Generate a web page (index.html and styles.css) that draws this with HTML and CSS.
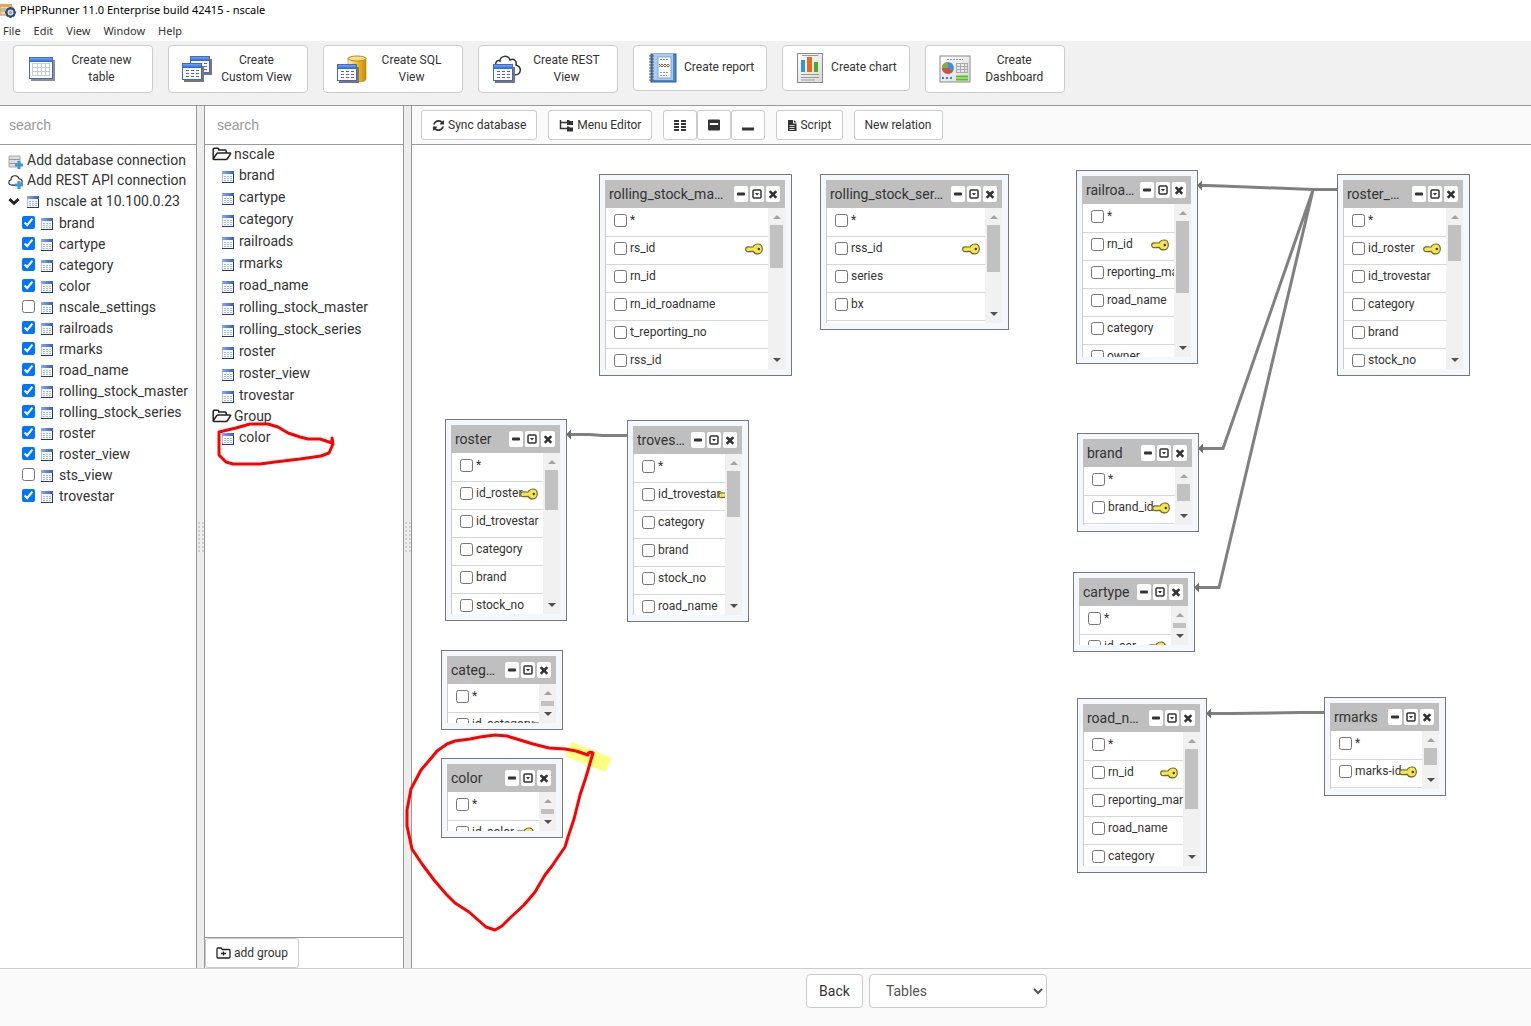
FILE: index.html
```html
<!DOCTYPE html>
<html lang="en">
<head>
<meta charset="utf-8">
<title>PHPRunner 11.0 Enterprise build 42415 - nscale</title>
<link rel="stylesheet" href="styles.css">
</head>
<body>
<svg class="defs" aria-hidden="true">
  <defs>
    <linearGradient id="blue" x1="0" x2="1"><stop offset="0" stop-color="#8fa8f0"/><stop offset="1" stop-color="#2f5fc8"/></linearGradient>
    <linearGradient id="bar" x1="0" x2="0" y1="0" y2="1"><stop offset="0" stop-color="#6fa4f8"/><stop offset="1" stop-color="#2a62d4"/></linearGradient>
    <linearGradient id="gold" x1="0" x2="1"><stop offset="0" stop-color="#fff0b0"/><stop offset=".5" stop-color="#f7c022"/><stop offset="1" stop-color="#c98a00"/></linearGradient>
    <linearGradient id="paper" x1="0" x2="1" y1="0" y2="1"><stop offset="0" stop-color="#ffffff"/><stop offset="1" stop-color="#d8d8d8"/></linearGradient>
  </defs>
  <symbol id="table" viewBox="0 0 12 12">
    <rect width="12" height="12" fill="#b9bbe8"/><path d="M11 1h1v11H0v-1h11z" fill="#2c3478"/>
    <rect x="1" y="3" width="10" height="8" fill="#f4faff"/><rect width="12" height="3" fill="url(#blue)"/>
    <path d="M2 5.500h2m1 0h2m1 0h2M2 7.500h2m1 0h2m1 0h2M2 9.500h2m1 0h2m1 0h2" stroke="#a9bccb"/>
  </symbol>
  <symbol id="grid-big" viewBox="0 0 26 24">
    <path d="M2 23h23V3" fill="none" stroke="#8e8e8e" stroke-width="2"/>
    <rect x=".5" y=".5" width="23" height="21" fill="#fff" stroke="#3f6cc0"/><rect x="1" y="1" width="22" height="4" fill="url(#bar)"/>
    <path d="M3 6.500h18M3 10.500h18M3 14.500h18M3 18.500h18M3.500 6v13M8.500 6v13M12.500 6v13M16.500 6v13M20.500 6v13" stroke="#c3cbd8"/>
  </symbol>
  <symbol id="grid-small" viewBox="0 0 22 19">
    <path d="M2 18h19V3" fill="none" stroke="#777" stroke-width="2"/>
    <rect x=".5" y=".5" width="19" height="16" fill="#f7f9fc" stroke="#3f6cc0"/><rect x="1" y="1" width="18" height="4" fill="url(#bar)"/>
    <path d="M4 7.500h3m2 0h3m2 0h3M4 10.500h3m2 0h3m2 0h3M4 13.500h3m2 0h3m2 0h3" stroke="#667"/>
  </symbol>
  <symbol id="key" viewBox="0 0 18 12">
    <path d="M9 2.600Q10.500 1 13 1c2.500 0 4.300 2 4.300 4.900s-2.100 5-4.700 5C10.600 10.900 9 10 8.300 8.400L3 8.600C1.500 8.600.6 7.500.7 6.100S1.600 3.900 2.800 3.900L8 4z" fill="#f7e64a" stroke="#6e6838" stroke-width="1.200"/><circle cx="13.800" cy="6" r="1.200" fill="#333"/>
  </symbol>
  <symbol id="times" viewBox="0 0 1792 1792"><path d="M1490 1322q0 40-28 68l-136 136q-28 28-68 28t-68-28l-294-294-294 294q-28 28-68 28t-68-28l-136-136q-28-28-28-68t28-68l294-294-294-294q-28-28-28-68t28-68l136-136q28-28 68-28t68 28l294 294 294-294q28-28 68-28t68 28l136 136q28 28 28 68t-28 68l-294 294 294 294q28 28 28 68z"/></symbol>
  <symbol id="minus" viewBox="0 0 12 12"><rect x="2" y="4.500" width="8" height="3" rx=".8"/></symbol>
  <symbol id="square" viewBox="0 0 12 12"><rect x="2" y="2" width="8" height="8" rx="1" fill="none" stroke="currentColor" stroke-width="1.500"/><path d="M4 5h4L6 7.400z"/></symbol>
  <symbol id="refresh" viewBox="0 0 1792 1792"><path d="M1639 1056q0 5-1 7-64 268-268 434.500t-478 166.500q-146 0-282.500-55t-243.500-157l-129 129q-19 19-45 19t-45-19-19-45v-448q0-26 19-45t45-19h448q26 0 45 19t19 45-19 45l-137 137q71 66 161 102t187 36q134 0 250-65t186-179q11-17 53-117 8-23 30-23h192q13 0 22.500 9.500t9.500 22.500zm25-800v448q0 26-19 45t-45 19h-448q-26 0-45-19t-19-45 19-45l138-138q-148-137-349-137-134 0-250 65t-186 179q-11 17-53 117-8 23-30 23h-199q-13 0-22.500-9.500t-9.500-22.500v-7q65-268 270-434.500t480-166.500q146 0 284 55.500t245 156.500l130-129q19-19 45-19t45 19 19 45z"/></symbol>
  <symbol id="folder" viewBox="0 0 20 14"><path d="M1.200 11.500V2.200q0-1 1-1h3.600q1 0 1 1v.9h6.400q1 0 1 1V6M1.200 11.800L4.600 6.800q.6-.8 1.500-.8h12q.9 0 .4.900l-3 4.600q-.6.900-1.500.9H2q-1 0-.8-.7" fill="none" stroke="#222" stroke-width="1.500"/></symbol>
  <symbol id="grip" viewBox="0 0 6 30"><path d="M1 0v30M5 0v30" stroke="#ccc" stroke-width="2" stroke-dasharray="2 2"/></symbol>
  <symbol id="cloud" viewBox="0 0 18 14"><path d="M5 12.500Q1 12.500 1 9.300 1 6.800 3.600 6.200 3.600 1.200 8.400 1.200q4 0 4.600 3.600 4 0 4 3.800 0 3.900-4.300 3.900z" fill="#fff" stroke="#222" stroke-width="1.300"/></symbol>
</svg>

<header class="titlebar">
  <svg class="app-icon" viewBox="0 0 16 16"><path d="M0 3h7l1 2h5v8H0z" fill="#f2d9a8" stroke="#b98a50"/><path d="M0 2h12v3H0z" fill="#e8a35a"/><path d="M1 7h5M1 9h5" stroke="#999"/><circle cx="10.500" cy="10.500" r="4" fill="#cfe0f4" stroke="#1f4b86" stroke-width="2"/><path d="M10.500 5v2m0 7v2M5 10.500h2m7 0h2M6.700 6.700l1.200 1.200m5.200 5.200l1.200 1.200m0-7.600l-1.200 1.200m-5.200 5.200l-1.200 1.200" stroke="#1f4b86" stroke-width="2"/><circle cx="10.500" cy="10.500" r="1.500" fill="#e08a2c"/></svg>
  <span>PHPRunner 11.0 Enterprise build 42415 - nscale</span>
</header>
<nav class="menubar">
  <button>File</button><button>Edit</button><button>View</button><button>Window</button><button>Help</button>
</nav>

<div class="toolbar">
  <button class="create wide"><svg class="i-new" viewBox="0 0 26 24"><use href="#grid-big"/></svg><span>Create new<br>table</span></button>
  <button class="create wide"><svg class="i-tool" viewBox="0 0 30 26"><use href="#grid-small" x="8" y="0" width="22" height="19"/><use href="#grid-small" x="0" y="7" width="22" height="19"/></svg><span>Create<br>Custom View</span></button>
  <button class="create wide"><svg class="i-tool" viewBox="0 0 30 28"><path d="M11 3v21q0 3 9 3t9-3V3z" fill="url(#gold)" stroke="#b07c10" stroke-width=".6"/><ellipse cx="20" cy="3.500" rx="9" ry="2.500" fill="#fbe08a" stroke="#b88a20"/><use href="#grid-small" x="0" y="9" width="22" height="19"/></svg><span>Create SQL<br>View</span></button>
  <button class="create wide"><svg class="i-tool" viewBox="0 0 30 28"><path d="M4 10C3 6 6 5 8 6 8 1 16-1 18 5c4-2 7 1 6 5 6 2 6 10-2 10" fill="#fff" stroke="#333" stroke-width="1.500"/><use href="#grid-small" x="1" y="9" width="22" height="19"/></svg><span>Create REST<br>View</span></button>
  <button class="create"><svg class="i-tool" viewBox="0 0 30 30"><rect x="4" y="1" width="25" height="28" fill="#4d86c4" stroke="#2e5f98"/><rect x="6" y="1" width="20" height="26" fill="#a8cdf0"/><rect x="11" y="4" width="13" height="21" fill="#fff" stroke="#7fa6cc"/><path d="M12 14l3-3 3 3 3-3 2 2" fill="none" stroke="#2ba02b"/><path d="M12 11l3 3 3-3 3 3 2-2" fill="none" stroke="#e03030"/><path d="M13 6.500h9M13 19.500h9M13 22.500h7" stroke="#999" stroke-dasharray="2 1"/><path d="M2 3h5M2 6h5M2 9h5M2 12h5M2 15h5M2 18h5M2 21h5M2 24h5M2 27h5" stroke="#555"/></svg><span>Create report</span></button>
  <button class="create"><svg class="i-chart" viewBox="0 0 28 32"><rect x="1.500" y="1.500" width="25" height="29" fill="url(#paper)" stroke="#8a8a8a"/><path d="M6 3.500h16M5 22.500h18M5 25.500h18M5 28h14" stroke="#999"/><path d="M5 8h4v12H5z" fill="#2b9bd8"/><path d="M11 5h5v15h-5z" fill="#e86a1c"/><path d="M18 10h4v10h-4z" fill="#4faa28"/></svg><span>Create chart</span></button>
  <button class="create wide"><svg class="i-dash" viewBox="0 0 32 28"><rect x="1" y="1" width="30" height="26" fill="url(#paper)" stroke="#8a8a8a"/><path d="M8 4.500h16" stroke="#999" stroke-dasharray="2 1"/><circle cx="9" cy="13" r="6" fill="#3f8fdc"/><path d="M9 13V7a6 6 0 0 0-6 6z" fill="#7fb040"/><path d="M9 13H3a6 6 0 0 0 11 3z" fill="#d8503a"/><path d="M17 8.500h12M17 11.500h12M17 14.500h12M17 17.500h12M17.500 8v10M21.500 8v10M25.500 8v10M28.500 8v10" stroke="#aaa"/><path d="M3 23h2m2 0h2m2 0h2" stroke="#2b8bd8" stroke-width="2"/><path d="M17 21.500h12M17 24.500h12" stroke="#54c420" stroke-width="2"/></svg><span>Create<br>Dashboard</span></button>
</div>

<main class="workspace">
  <section class="pane pane-db">
    <input class="search" type="text" placeholder="search" aria-label="Search database tables">
    <ul class="tree">
      <li class="row-add"><svg viewBox="0 0 15 15"><path d="M1 2h11v11H1z" fill="#ddd" stroke="#aaa"/><path d="M1 5.500h11M1 9.500h11" stroke="#999"/><path d="M11 7v8M7 11h8" stroke="#3d9ad8" stroke-width="3"/></svg><a href="#">Add database connection</a></li>
      <li class="row-add"><svg viewBox="0 0 15 15"><use href="#cloud" x="0" y="0" width="15" height="13"/><path d="M11 7v8M7 11h8" stroke="#3d9ad8" stroke-width="3"/></svg><a href="#">Add REST API connection</a></li>
      <li class="row-conn"><svg viewBox="0 0 13 13"><path d="M1.500 4.500l5 4.500 5-4.500" fill="none" stroke="#222" stroke-width="3"/></svg><svg><use href="#table"/></svg><span>nscale at 10.100.0.23</span></li>
      <li><label><input type="checkbox" checked><svg><use href="#table"/></svg>brand</label></li>
      <li><label><input type="checkbox" checked><svg><use href="#table"/></svg>cartype</label></li>
      <li><label><input type="checkbox" checked><svg><use href="#table"/></svg>category</label></li>
      <li><label><input type="checkbox" checked><svg><use href="#table"/></svg>color</label></li>
      <li><label><input type="checkbox"><svg><use href="#table"/></svg>nscale_settings</label></li>
      <li><label><input type="checkbox" checked><svg><use href="#table"/></svg>railroads</label></li>
      <li><label><input type="checkbox" checked><svg><use href="#table"/></svg>rmarks</label></li>
      <li><label><input type="checkbox" checked><svg><use href="#table"/></svg>road_name</label></li>
      <li><label><input type="checkbox" checked><svg><use href="#table"/></svg>rolling_stock_master</label></li>
      <li><label><input type="checkbox" checked><svg><use href="#table"/></svg>rolling_stock_series</label></li>
      <li><label><input type="checkbox" checked><svg><use href="#table"/></svg>roster</label></li>
      <li><label><input type="checkbox" checked><svg><use href="#table"/></svg>roster_view</label></li>
      <li><label><input type="checkbox"><svg><use href="#table"/></svg>sts_view</label></li>
      <li><label><input type="checkbox" checked><svg><use href="#table"/></svg>trovestar</label></li>
    </ul>
  </section>

  <div class="splitter"><svg><use href="#grip"/></svg></div>

  <section class="pane pane-groups">
    <input class="search" type="text" placeholder="search" aria-label="Search project tables">
    <ul class="groups">
      <li class="group"><svg><use href="#folder"/></svg>nscale</li>
      <li><svg><use href="#table"/></svg>brand</li>
      <li><svg><use href="#table"/></svg>cartype</li>
      <li><svg><use href="#table"/></svg>category</li>
      <li><svg><use href="#table"/></svg>railroads</li>
      <li><svg><use href="#table"/></svg>rmarks</li>
      <li><svg><use href="#table"/></svg>road_name</li>
      <li><svg><use href="#table"/></svg>rolling_stock_master</li>
      <li><svg><use href="#table"/></svg>rolling_stock_series</li>
      <li><svg><use href="#table"/></svg>roster</li>
      <li><svg><use href="#table"/></svg>roster_view</li>
      <li><svg><use href="#table"/></svg>trovestar</li>
      <li class="group"><svg><use href="#folder"/></svg>Group</li>
      <li><svg><use href="#table"/></svg>color</li>
    </ul>
    <div class="pane-foot">
      <button class="btn"><svg class="i-addgroup" viewBox="0 0 15 12"><path d="M1 10V2q0-1 1-1h3l1.500 1.500H13q1 0 1 1V10q0 1-1 1H2q-1 0-1-1zM5 6.500h5M7.500 4.500v4" fill="none" stroke="#222" stroke-width="1.300"/></svg>add group</button>
    </div>
  </section>

  <div class="splitter"><svg><use href="#grip"/></svg></div>

  <section class="designer">
    <div class="actions">
      <button class="btn"><svg class="i-sync"><use href="#refresh"/></svg>Sync database</button>
      <button class="btn"><svg class="i-menu" viewBox="0 0 15 13"><path d="M1.500 1v8.500H8M1.500 3.500H8" fill="none" stroke="#333" stroke-width="1.500"/><path d="M8 1h2l1 1h3v4H8zM8 7.500h2l1 1h3v4H8z"/></svg>Menu Editor</button>
      <div class="btn-group">
        <button class="btn" aria-label="Show all fields"><svg viewBox="0 0 14 14"><path d="M1 3h5m2 0h5M1 6h5m2 0h5M1 9h5m2 0h5M1 12h5m2 0h5" stroke="#333" stroke-width="2"/></svg></button>
        <button class="btn" aria-label="Show key fields"><svg viewBox="0 0 14 14"><path d="M2 1.500h10q1 0 1 1v9q0 1-1 1H2q-1 0-1-1v-9q0-1 1-1zm.800 3.500v2h8.400V5z" fill-rule="evenodd"/></svg></button>
        <button class="btn" aria-label="Collapse"><svg viewBox="0 0 14 14"><path d="M1 9.500h12v3H1z"/></svg></button>
      </div>
      <button class="btn"><svg class="i-script" viewBox="0 0 10 13"><path d="M1 1h5v3.500h3.500V12H1zM7 1l2.500 2.500H7z"/><path d="M2.500 6.500h5M2.500 8.500h5M2.500 10.500h5" stroke="#fff" stroke-width=".8"/></svg>Script</button>
      <button class="btn">New relation</button>
    </div>

    <div class="canvas">
      <svg class="links" aria-hidden="true">
        <g transform="translate(-412 -145)">
          <path d="M1337 189.500H1313L1222 186 1206 185.500H1201M1313 190L1223 448.500H1201M1313 190L1219 587.500H1198M627 435.500H602L590 434.500H570M1324 712.500H1300L1231 713.500H1210" fill="none" stroke="#808080" stroke-width="3"/>
          <path d="M1197 185.500l5-5v10zM1198 448.500l5-5v10zM1194 587.500l5-5v10zM566 434.500l5-5v10zM1206 713.500l5-5v10z" fill="#707070"/>
        </g>
      </svg>

      <article class="win win-master">
        <header><h2>rolling_stock_ma…</h2><button aria-label="Minimize"><svg><use href="#minus"/></svg></button><button aria-label="Keys"><svg><use href="#square"/></svg></button><button aria-label="Close"><svg><use href="#times"/></svg></button></header>
        <div class="body"><ul>
          <li><label><input type="checkbox">*</label></li>
          <li><label><input type="checkbox">rs_id</label><svg><use href="#key"/></svg></li>
          <li><label><input type="checkbox">rn_id</label></li>
          <li><label><input type="checkbox">rn_id_roadname</label></li>
          <li><label><input type="checkbox">t_reporting_no</label></li>
          <li><label><input type="checkbox">rss_id</label></li>
        </ul><div class="scroll"><i></i></div></div>
      </article>

      <article class="win win-series">
        <header><h2>rolling_stock_ser…</h2><button aria-label="Minimize"><svg><use href="#minus"/></svg></button><button aria-label="Keys"><svg><use href="#square"/></svg></button><button aria-label="Close"><svg><use href="#times"/></svg></button></header>
        <div class="body"><ul>
          <li><label><input type="checkbox">*</label></li>
          <li><label><input type="checkbox">rss_id</label><svg><use href="#key"/></svg></li>
          <li><label><input type="checkbox">series</label></li>
          <li><label><input type="checkbox">bx</label></li>
        </ul><div class="scroll"><i></i></div></div>
      </article>

      <article class="win win-railroads">
        <header><h2>railroa…</h2><button aria-label="Minimize"><svg><use href="#minus"/></svg></button><button aria-label="Keys"><svg><use href="#square"/></svg></button><button aria-label="Close"><svg><use href="#times"/></svg></button></header>
        <div class="body"><ul>
          <li><label><input type="checkbox">*</label></li>
          <li><label><input type="checkbox">rn_id</label><svg><use href="#key"/></svg></li>
          <li><label><input type="checkbox">reporting_mark</label></li>
          <li><label><input type="checkbox">road_name</label></li>
          <li><label><input type="checkbox">category</label></li>
          <li><label><input type="checkbox">owner</label></li>
        </ul><div class="scroll"><i></i></div></div>
      </article>

      <article class="win win-rosterview">
        <header><h2>roster_…</h2><button aria-label="Minimize"><svg><use href="#minus"/></svg></button><button aria-label="Keys"><svg><use href="#square"/></svg></button><button aria-label="Close"><svg><use href="#times"/></svg></button></header>
        <div class="body"><ul>
          <li><label><input type="checkbox">*</label></li>
          <li><label><input type="checkbox">id_roster</label><svg><use href="#key"/></svg></li>
          <li><label><input type="checkbox">id_trovestar</label></li>
          <li><label><input type="checkbox">category</label></li>
          <li><label><input type="checkbox">brand</label></li>
          <li><label><input type="checkbox">stock_no</label></li>
        </ul><div class="scroll"><i></i></div></div>
      </article>

      <article class="win win-roster">
        <header><h2>roster</h2><button aria-label="Minimize"><svg><use href="#minus"/></svg></button><button aria-label="Keys"><svg><use href="#square"/></svg></button><button aria-label="Close"><svg><use href="#times"/></svg></button></header>
        <div class="body"><ul>
          <li><label><input type="checkbox">*</label></li>
          <li><label><input type="checkbox">id_roster</label><svg><use href="#key"/></svg></li>
          <li><label><input type="checkbox">id_trovestar</label></li>
          <li><label><input type="checkbox">category</label></li>
          <li><label><input type="checkbox">brand</label></li>
          <li><label><input type="checkbox">stock_no</label></li>
        </ul><div class="scroll"><i></i></div></div>
      </article>

      <article class="win win-trovestar">
        <header><h2>troves…</h2><button aria-label="Minimize"><svg><use href="#minus"/></svg></button><button aria-label="Keys"><svg><use href="#square"/></svg></button><button aria-label="Close"><svg><use href="#times"/></svg></button></header>
        <div class="body"><ul>
          <li><label><input type="checkbox">*</label></li>
          <li><label><input type="checkbox">id_trovestar</label><svg><use href="#key"/></svg></li>
          <li><label><input type="checkbox">category</label></li>
          <li><label><input type="checkbox">brand</label></li>
          <li><label><input type="checkbox">stock_no</label></li>
          <li><label><input type="checkbox">road_name</label></li>
        </ul><div class="scroll"><i></i></div></div>
      </article>

      <article class="win win-category">
        <header><h2>categ…</h2><button aria-label="Minimize"><svg><use href="#minus"/></svg></button><button aria-label="Keys"><svg><use href="#square"/></svg></button><button aria-label="Close"><svg><use href="#times"/></svg></button></header>
        <div class="body"><ul>
          <li><label><input type="checkbox">*</label></li>
          <li><label><input type="checkbox">id_category</label><svg><use href="#key"/></svg></li>
        </ul><div class="scroll"><i></i></div></div>
      </article>

      <article class="win win-color">
        <header><h2>color</h2><button aria-label="Minimize"><svg><use href="#minus"/></svg></button><button aria-label="Keys"><svg><use href="#square"/></svg></button><button aria-label="Close"><svg><use href="#times"/></svg></button></header>
        <div class="body"><ul>
          <li><label><input type="checkbox">*</label></li>
          <li><label><input type="checkbox">id_color</label><svg><use href="#key"/></svg></li>
        </ul><div class="scroll"><i></i></div></div>
      </article>

      <article class="win win-brand">
        <header><h2>brand</h2><button aria-label="Minimize"><svg><use href="#minus"/></svg></button><button aria-label="Keys"><svg><use href="#square"/></svg></button><button aria-label="Close"><svg><use href="#times"/></svg></button></header>
        <div class="body"><ul>
          <li><label><input type="checkbox">*</label></li>
          <li><label><input type="checkbox">brand_id</label><svg><use href="#key"/></svg></li>
        </ul><div class="scroll"><i></i></div></div>
      </article>

      <article class="win win-cartype">
        <header><h2>cartype</h2><button aria-label="Minimize"><svg><use href="#minus"/></svg></button><button aria-label="Keys"><svg><use href="#square"/></svg></button><button aria-label="Close"><svg><use href="#times"/></svg></button></header>
        <div class="body"><ul>
          <li><label><input type="checkbox">*</label></li>
          <li><label><input type="checkbox">id_car</label><svg><use href="#key"/></svg></li>
        </ul><div class="scroll"><i></i></div></div>
      </article>

      <article class="win win-roadname">
        <header><h2>road_n…</h2><button aria-label="Minimize"><svg><use href="#minus"/></svg></button><button aria-label="Keys"><svg><use href="#square"/></svg></button><button aria-label="Close"><svg><use href="#times"/></svg></button></header>
        <div class="body"><ul>
          <li><label><input type="checkbox">*</label></li>
          <li><label><input type="checkbox">rn_id</label><svg><use href="#key"/></svg></li>
          <li><label><input type="checkbox">reporting_mark</label></li>
          <li><label><input type="checkbox">road_name</label></li>
          <li><label><input type="checkbox">category</label></li>
        </ul><div class="scroll"><i></i></div></div>
      </article>

      <article class="win win-rmarks">
        <header><h2>rmarks</h2><button aria-label="Minimize"><svg><use href="#minus"/></svg></button><button aria-label="Keys"><svg><use href="#square"/></svg></button><button aria-label="Close"><svg><use href="#times"/></svg></button></header>
        <div class="body"><ul>
          <li><label><input type="checkbox">*</label></li>
          <li><label><input type="checkbox">marks-id</label><svg><use href="#key"/></svg></li>
        </ul><div class="scroll"><i></i></div></div>
      </article>
    </div>
  </section>
</main>

<footer class="footer">
  <button class="btn-lg">Back</button>
  <select class="btn-lg" aria-label="Go to page"><option>Tables</option></select>
</footer>

<svg class="ink" aria-hidden="true">
  <path d="M572 742L612 758 605 772 565 756z" fill="#ffff80"/>
  <g fill="none" stroke="#f00" stroke-width="3" stroke-linecap="round" stroke-linejoin="round">
    <path d="M219 432L236 428 250 424H268L278 427 288 433 300 437 308 439H320L332 443V438L333 444 329 453 321 456 300 459 275 462 260 464H233L226 462 219 455z"/>
    <path d="M593 753Q588 751 588 755L576 751 565 749 549 748 533 744 520 740 507 736 495 735 480 737 470 739 455 741 447 744 437 751 433 756 421 770 411 789 407 810 407 826 412 849 422 864 434 880 446 894 455 903 469 912 486 927 495 930 502 926 511 917 524 905 535 892 545 875 552 866 556 860 565 847 568 837 574 819 580 795 586 777 593 753z"/>
  </g>
</svg>
</body>
</html>
```
FILE: styles.css
```css
* { box-sizing: border-box; }

body {
  position: relative;
  margin: 0;
  min-height: 100vh;
  display: flex;
  flex-direction: column;
  overflow: hidden;
  font-family: Roboto, "Liberation Sans", sans-serif;
  font-size: 14px;
  line-height: 20px;
  color: #333;
  background: #fff;
}

button, input, select { font: inherit; color: inherit; }
ul { list-style: none; margin: 0; padding: 0; }
h2 { margin: 0; font-weight: 400; }
a { color: inherit; text-decoration: none; }
svg { flex: none; fill: currentColor; }
.defs { position: absolute; width: 0; height: 0; }

input[type="checkbox"] { width: 13px; height: 13px; margin: 0; flex: none; }

/* title and menu */
.titlebar {
  display: flex;
  align-items: center;
  gap: 4px;
  height: 20px;
  font: 11px/20px "Noto Sans", sans-serif;
  color: #000;
}
.app-icon { width: 16px; height: 18px; }
.menubar {
  display: flex;
  gap: 13px;
  height: 21px;
  padding-left: 3px;
}
.menubar button {
  padding: 0;
  border: 0;
  background: none;
  font: 11px/20px "Noto Sans", sans-serif;
}

/* create buttons */
.toolbar {
  display: flex;
  align-items: flex-start;
  gap: 15px;
  height: 65px;
  padding: 4px 13px;
  background: #f1f1f1;
  border-bottom: 1px solid #999;
}
.create {
  display: flex;
  align-items: center;
  gap: 7px;
  height: 46px;
  padding: 0 12px 0 13px;
  border: 1px solid #ccc;
  border-radius: 4px;
  background: #fff;
  font-size: 12px;
  line-height: 17px;
}
.create span { padding-bottom: 2px; }
.create.wide { width: 140px; height: 48px; padding: 0 13px; }
.create.wide span { flex: 1; padding: 0; }
.i-new { width: 26px; height: 24px; margin: 0 2px; }
.i-tool { width: 30px; height: 30px; }
.i-chart { width: 28px; height: 32px; }
.i-dash { width: 32px; height: 28px; }

/* panes */
.workspace { flex: 1; display: flex; min-height: 0; }
.pane { display: flex; flex-direction: column; }
.pane-db { width: 196px; }
.pane-groups { width: 198px; }
.splitter {
  display: flex;
  align-items: center;
  justify-content: center;
  width: 9px;
  background: #ededed;
  border: solid #999;
  border-width: 0 1px;
}
.splitter svg { width: 6px; height: 30px; }
.search {
  width: 100%;
  height: 39px;
  padding: 0 9px;
  border: 0;
  border-bottom: 1px solid #999;
  outline: 0;
  background: #fff;
  font: 14px "Liberation Sans", Arial, sans-serif;
}
.pane-groups .search { padding-left: 12px; }
.search::placeholder { color: #999; }

.tree { padding-top: 5px; }
.tree li, .tree label { display: flex; align-items: center; height: 21px; }
.tree label { gap: 6px; padding-left: 22px; }
.tree label svg, .row-conn svg + svg { margin-top: 2px; }
.tree svg { width: 12px; height: 12px; }
.tree .row-add { height: 20px; gap: 4px; padding-left: 8px; }
.tree .row-add svg { width: 15px; height: 15px; margin-top: 2px; }
.tree .row-conn { height: 22px; gap: 7px; padding-left: 8px; }

.groups { flex: 1; margin-top: -1px; }
.groups li { display: flex; align-items: center; gap: 5px; height: 22px; padding-left: 17px; }
.groups li svg { width: 12px; height: 12px; margin-top: 3px; }
.groups .group { height: 20px; gap: 2px; padding-left: 7px; }
.groups .group svg { width: 20px; height: 14px; margin-top: 0; }
.pane-foot { border-top: 1px solid #999; }

.btn {
  display: flex;
  align-items: center;
  justify-content: center;
  gap: 3px;
  height: 30px;
  padding: 0 10px;
  border: 1px solid #ccc;
  border-radius: 3px;
  background: #fff;
  font-size: 12px;
}
.i-addgroup { width: 15px; height: 12px; }
.i-sync { width: 13px; height: 13px; }
.i-menu { width: 15px; height: 13px; }
.i-script { width: 10px; height: 13px; }

/* designer */
.designer { flex: 1; display: flex; flex-direction: column; min-width: 0; }
.actions {
  display: flex;
  gap: 11px;
  height: 39px;
  padding: 4px 9px;
  background: #fafafa;
  border-bottom: 1px solid #999;
}
.btn-group { display: flex; }
.btn-group .btn { width: 34px; padding: 0; }
.btn-group svg { width: 14px; height: 14px; }

.canvas { position: relative; flex: 1; overflow: hidden; }
.links { position: absolute; inset: 0; width: 100%; height: 100%; }

.win {
  position: absolute;
  display: flex;
  flex-direction: column;
  width: 122px;
  padding: 5px 6px 6px 5px;
  border: 1px solid #777;
  background: #f4f8fd;
}
.win header {
  display: flex;
  align-items: center;
  gap: 2px;
  height: 28px;
  padding: 0 5px 0 4px;
  background: #bfbfbf;
}
.win h2 { flex: 1; min-width: 0; font-size: 14px; white-space: nowrap; }
.win header button {
  display: flex;
  align-items: center;
  justify-content: center;
  width: 14px;
  height: 16px;
  padding: 0;
  border: 0;
  border-radius: 2px;
  background: #fff;
}
.win header svg { width: 12px; height: 12px; }
.win .body { flex: 1; display: flex; min-height: 0; overflow: hidden; border-left: 1px solid #ccc; background: #fff; }
.win ul { flex: 1; min-width: 0; overflow: hidden; padding-top: 1px; }
.win li {
  display: flex;
  align-items: center;
  height: 28px;
  padding: 0 5px 5px 8px;
  border-bottom: 1px solid #d6d6d6;
}
.win li label { display: flex; align-items: center; gap: 3px; flex: none; margin-right: -3px; font-size: 12px; }
.win li svg { width: 18px; height: 12px; margin: 2px 0 0 auto; z-index: 1; }

.scroll {
  display: flex;
  flex-direction: column;
  align-items: center;
  flex: none;
  width: 17px;
  padding-top: 7px;
  background: #f1f1f1;
}
.scroll::before, .scroll::after { content: ""; border: solid transparent; border-width: 0 4px; }
.scroll::before { border-bottom: 4px solid #a3a3a3; margin-bottom: 6px; }
.scroll::after { border-top: 4px solid #505050; margin: auto 0 7px; }
.scroll i { flex: none; width: 13px; height: 17px; background: #c1c1c1; }

/* window positions on the diagram */
.win-master { left: 187px; top: 29px; width: 193px; height: 202px; }
.win-series { left: 408px; top: 29px; width: 189px; height: 156px; }
.win-railroads { left: 664px; top: 25px; height: 194px; }
.win-rosterview { left: 925px; top: 29px; width: 133px; height: 202px; }
.win-roster { left: 33px; top: 274px; height: 202px; }
.win-trovestar { left: 215px; top: 275px; height: 202px; }
.win-category { left: 29px; top: 505px; height: 80px; }
.win-color { left: 29px; top: 613px; height: 80px; }
.win-brand { left: 665px; top: 288px; height: 99px; }
.win-cartype { left: 661px; top: 427px; height: 80px; }
.win-roadname { left: 665px; top: 553px; width: 130px; height: 175px; }
.win-rmarks { left: 912px; top: 552px; height: 99px; }
.win-master i { height: 43px; }
.win-series i { height: 47px; }
.win-railroads i { height: 72px; }
.win-rosterview i { height: 36px; }
.win-roster i { height: 40px; }
.win-trovestar i { height: 46px; }
.win-category i, .win-color i, .win-cartype i { height: 5px; }
.win-roadname i { height: 60px; }

/* footer */
.footer {
  display: flex;
  justify-content: center;
  gap: 6px;
  height: 58px;
  padding: 5px 0 0 322px;
  background: #fafafa;
  border-top: 1px solid #ccc;
}
.btn-lg {
  height: 34px;
  padding: 0 12px;
  border: 1px solid #ccc;
  border-radius: 4px;
  background: #fff;
}
select.btn-lg { width: 178px; padding: 0 0 0 12px; color: #555; }

.ink {
  position: absolute;
  left: 0;
  top: 0;
  width: 100%;
  height: 100%;
  pointer-events: none;
}
```
